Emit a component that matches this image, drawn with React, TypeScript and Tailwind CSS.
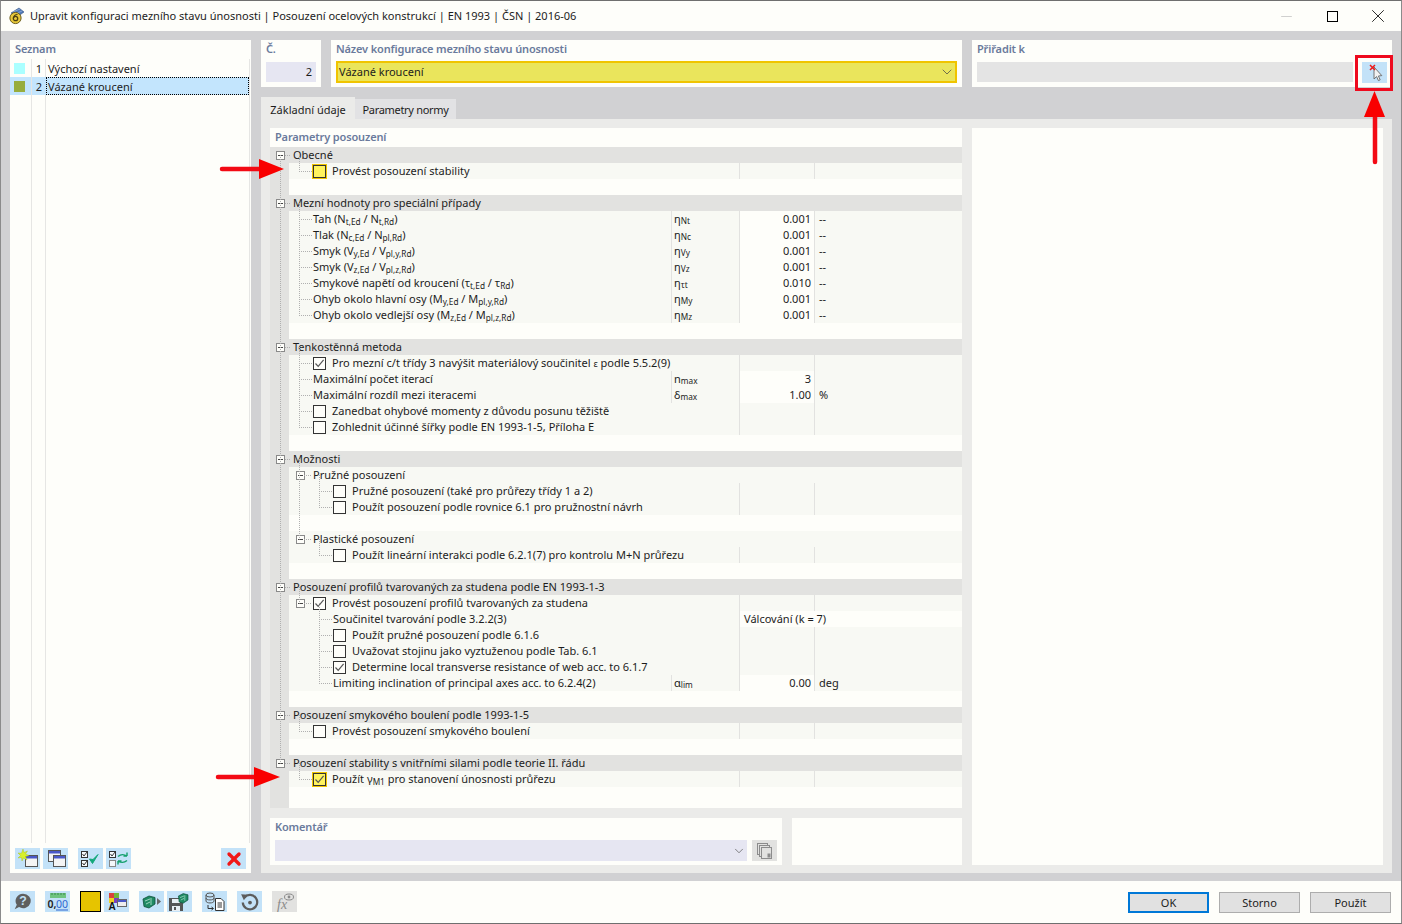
import type { ReactNode } from 'react';
import { ChevronDown, Minus, X } from 'lucide-react';

type Check = 'off' | 'on' | 'warn' | 'warnOn';

interface TreeRow {
  kind: 'head' | 'sub' | 'item' | 'blank';
  level?: number;
  box?: boolean;
  check?: Check;
  label?: ReactNode;
  sym?: ReactNode;
  value?: string;
  unit?: string;
  wide?: string;
}

const eta = (s: string) => (
  <>
    η<sub>{s}</sub>
  </>
);

const limit = (label: ReactNode, s: string, value: string): TreeRow => ({
  kind: 'item',
  level: 1,
  label,
  sym: eta(s),
  value,
  unit: '--',
});

const rows: TreeRow[] = [
  { kind: 'head', label: 'Obecné' },
  { kind: 'item', level: 1, check: 'warn', label: 'Provést posouzení stability' },
  { kind: 'blank' },
  { kind: 'head', label: 'Mezní hodnoty pro speciální případy' },
  limit(<>Tah (N<sub>t,Ed</sub> / N<sub>t,Rd</sub>)</>, 'Nt', '0.001'),
  limit(<>Tlak (N<sub>c,Ed</sub> / N<sub>pl,Rd</sub>)</>, 'Nc', '0.001'),
  limit(<>Smyk (V<sub>y,Ed</sub> / V<sub>pl,y,Rd</sub>)</>, 'Vy', '0.001'),
  limit(<>Smyk (V<sub>z,Ed</sub> / V<sub>pl,z,Rd</sub>)</>, 'Vz', '0.001'),
  limit(<>Smykové napětí od kroucení (τ<sub>t,Ed</sub> / τ<sub>Rd</sub>)</>, 'τt', '0.010'),
  limit(<>Ohyb okolo hlavní osy (M<sub>y,Ed</sub> / M<sub>pl,y,Rd</sub>)</>, 'My', '0.001'),
  limit(<>Ohyb okolo vedlejší osy (M<sub>z,Ed</sub> / M<sub>pl,z,Rd</sub>)</>, 'Mz', '0.001'),
  { kind: 'blank' },
  { kind: 'head', label: 'Tenkostěnná metoda' },
  { kind: 'item', level: 1, check: 'on', label: <>Pro mezní c/t třídy 3 navýšit materiálový součinitel <span className="text-[9px]">ε</span> podle 5.5.2(9)</> },
  { kind: 'item', level: 1, label: 'Maximální počet iterací', sym: <>n<sub>max</sub></>, value: '3' },
  { kind: 'item', level: 1, label: 'Maximální rozdíl mezi iteracemi', sym: <>δ<sub>max</sub></>, value: '1.00', unit: '%' },
  { kind: 'item', level: 1, check: 'off', label: 'Zanedbat ohybové momenty z důvodu posunu těžiště' },
  { kind: 'item', level: 1, check: 'off', label: 'Zohlednit účinné šířky podle EN 1993-1-5, Příloha E' },
  { kind: 'blank' },
  { kind: 'head', label: 'Možnosti' },
  { kind: 'sub', level: 1, box: true, label: 'Pružné posouzení' },
  { kind: 'item', level: 2, check: 'off', label: 'Pružné posouzení (také pro průřezy třídy 1 a 2)' },
  { kind: 'item', level: 2, check: 'off', label: 'Použít posouzení podle rovnice 6.1 pro pružnostní návrh' },
  { kind: 'blank' },
  { kind: 'sub', level: 1, box: true, label: 'Plastické posouzení' },
  { kind: 'item', level: 2, check: 'off', label: 'Použít lineární interakci podle 6.2.1(7) pro kontrolu M+N průřezu' },
  { kind: 'blank' },
  { kind: 'head', label: 'Posouzení profilů tvarovaných za studena podle EN 1993-1-3' },
  { kind: 'item', level: 1, box: true, check: 'on', label: 'Provést posouzení profilů tvarovaných za studena' },
  { kind: 'item', level: 2, label: 'Součinitel tvarování podle 3.2.2(3)', wide: 'Válcování (k = 7)' },
  { kind: 'item', level: 2, check: 'off', label: 'Použít pružné posouzení podle 6.1.6' },
  { kind: 'item', level: 2, check: 'off', label: 'Uvažovat stojinu jako vyztuženou podle Tab. 6.1' },
  { kind: 'item', level: 2, check: 'on', label: 'Determine local transverse resistance of web acc. to 6.1.7' },
  { kind: 'item', level: 2, label: 'Limiting inclination of principal axes acc. to 6.2.4(2)', sym: <>α<sub>lim</sub></>, value: '0.00', unit: 'deg' },
  { kind: 'blank' },
  { kind: 'head', label: 'Posouzení smykového boulení podle 1993-1-5' },
  { kind: 'item', level: 1, check: 'off', label: 'Provést posouzení smykového boulení' },
  { kind: 'blank' },
  { kind: 'head', label: 'Posouzení stability s vnitřními silami podle teorie II. řádu' },
  { kind: 'item', level: 1, check: 'warnOn', label: <>Použít γ<sub>M1</sub> pro stanovení únosnosti průřezu</> },
];

function PlusBox() {
  return (
    <span className="flex h-[9px] w-[9px] shrink-0 items-center justify-center border border-[#8a8a8a] bg-[#fefefa]">
      <span className="h-px w-[5px] bg-[#444]" />
    </span>
  );
}

function CheckBox({ state }: { state: Check }) {
  const warn = state === 'warn' || state === 'warnOn';
  const on = state === 'on' || state === 'warnOn';
  return (
    <span
      className={`flex h-[13px] w-[13px] shrink-0 items-center justify-center border border-[#333] ${
        warn ? 'bg-[#fff35e] outline-1 outline-[#f0c400]' : 'bg-[#fefefa]'
      }`}
    >
      {on && (
        <svg width="11" height="11" viewBox="0 0 11 11" fill="none">
          <path d="M1.5 5.5 L4.2 8.4 L9.6 1.8" stroke="#555" strokeWidth="1.2" />
        </svg>
      )}
    </span>
  );
}

function Row({ row }: { row: TreeRow }) {
  if (row.kind === 'blank') {
    return (
      <div className="flex h-4">
        <div className="w-[19px] bg-[#e2e2e0]" />
      </div>
    );
  }
  if (row.kind === 'head') {
    return (
      <div className="flex h-4 items-center bg-[#e2e2e0]">
        <div className="flex w-[23px] shrink-0 pl-[6px]">
          <PlusBox />
        </div>
        <span>{row.label}</span>
      </div>
    );
  }
  const pad = row.level === 2 ? 'pl-[44px]' : row.box ? 'pl-[7px]' : 'pl-[24px]';
  return (
    <div className="flex h-4">
      <div className="w-[19px] shrink-0 bg-[#e2e2e0]" />
      <div className="flex min-w-0 flex-1 bg-[#f8f9f4]">
        <div className={`flex w-[382px] shrink-0 items-center whitespace-nowrap ${pad}`}>
          {row.box && (
            <span className="mr-[8px]">
              <PlusBox />
            </span>
          )}
          {row.check && (
            <span className="mr-[6px]">
              <CheckBox state={row.check} />
            </span>
          )}
          <span>{row.label}</span>
        </div>
        {row.kind === 'item' && (
          <>
            <div className={`flex w-[68px] shrink-0 items-center pl-[2px] ${row.sym ? 'border-l border-[#e2e2e0]' : ''}`}>
              {row.sym}
            </div>
            {row.wide ? (
              <div className="flex flex-1 items-center border-l border-[#e2e2e0] bg-[#fefefa] pl-1">{row.wide}</div>
            ) : (
              <>
                <div
                  className={`flex w-[75px] shrink-0 items-center justify-end border-l border-[#e2e2e0] pr-[3px] ${
                    row.value ? 'bg-[#fefefa]' : ''
                  }`}
                >
                  {row.value}
                </div>
                <div className="flex flex-1 items-center border-l border-[#e2e2e0] pl-1">{row.unit}</div>
              </>
            )}
          </>
        )}
      </div>
    </div>
  );
}

// dotted connectors of the tree, worked out from the row levels
function TreeLines() {
  const stems = [10, 29, 49];
  const segs: string[] = [];
  rows.forEach((row, i) => {
    if (row.kind === 'blank') return;
    const level = row.level ?? 0;
    const y = i * 16 + 8.5;
    let p = i - 1;
    while (p >= 0 && (rows[p].kind === 'blank' || (rows[p].level ?? 0) > level)) p--;
    if (p >= 0 && (rows[p].level ?? 0) >= level - 1) {
      const x = stems[level] + 0.5;
      segs.push(`M${x} ${p * 16 + 8}V${y}`);
    }
    if (level === 0) segs.push(`M15 ${y}H21`);
    else if (row.box) segs.push(`M${stems[level] + 5} ${y}H41`);
    else segs.push(`M${stems[level]} ${y}H${stems[level] + 13}`);
  });
  return (
    <svg className="pointer-events-none absolute left-0 top-0" width="80" height="660" fill="none">
      <path d={segs.join('')} stroke="#b0b0b0" strokeDasharray="1 1" />
    </svg>
  );
}

function Tool({ children, gray = false, className = '' }: { children: ReactNode; gray?: boolean; className?: string }) {
  return (
    <div className={`flex h-[21px] w-[25px] shrink-0 items-center justify-center ${gray ? 'bg-[#e2e2e0]' : 'bg-[#c3e2f8]'} ${className}`}>
      {children}
    </div>
  );
}

function DialogButton({ label, primary = false }: { label: string; primary?: boolean }) {
  return (
    <button
      className={`h-[21px] w-[81px] bg-[#e1e1e1] pt-px text-[11px] ${
        primary ? 'border-2 border-[#0078d7]' : 'border border-[#adadad]'
      }`}
    >
      {label}
    </button>
  );
}

const heading = 'text-[11px] font-semibold tracking-[-0.15px] text-[#6a7a9c]';

function AppLogo() {
  return (
    <svg width="18" height="18" viewBox="0 0 18 18">
      <path d="M3 6 L11 1 L16 5 L9 10 Z" fill="#4f79b8" stroke="#33517f" strokeWidth=".6" />
      <path d="M5 5 L12 2 M7 7 L14 4" stroke="#9db8de" strokeWidth=".7" />
      <circle cx="7.5" cy="11" r="5.6" fill="#e8c93a" stroke="#6b5c1b" />
      <circle cx="7.5" cy="11.5" r="2.2" fill="none" stroke="#4a4010" strokeWidth="1.3" />
      <path d="M5.6 11 Q6 7.5 9.5 7.5" fill="none" stroke="#4a4010" strokeWidth="1.2" />
    </svg>
  );
}

function WinIcon({ x, y }: { x: number; y: number }) {
  return (
    <g>
      <rect x={x + 0.5} y={y + 0.5} width="12" height="11" fill="#f4f4f4" stroke="#555" />
      <rect x={x + 1} y={y + 1} width="11" height="2.5" fill="#4a58c8" />
    </g>
  );
}

function NewIcon() {
  return (
    <svg width="22" height="19" viewBox="0 0 22 19">
      <WinIcon x={8} y={6} />
      <path d="M6 0 L7 3.5 L10.5 2 L8.5 5 L12 6.5 L8.5 7.5 L10 11 L6.5 9 L5 12 L4.5 8.5 L1 9 L3.5 6.5 L1 4 L4.5 4.2 Z" fill="#d8f02a" stroke="#9fb81a" strokeWidth=".4" />
    </svg>
  );
}

function CopyIcon() {
  return (
    <svg width="22" height="19" viewBox="0 0 22 19">
      <WinIcon x={3} y={1} />
      <WinIcon x={8} y={6} />
    </svg>
  );
}

function MiniBox({ y, checked = true }: { y: number; checked?: boolean }) {
  return (
    <g>
      <rect x="3.5" y={y + 0.5} width="6" height="6" fill="#f4f8fb" stroke={checked ? '#333' : '#888'} />
      {checked && <path d={`M4.5 ${y + 3} L6 ${y + 5} L9 ${y + 1}`} fill="none" stroke="#222" strokeWidth=".9" />}
    </g>
  );
}

function CheckAllIcon() {
  return (
    <svg width="25" height="21" viewBox="0 0 25 21">
      <MiniBox y={3} />
      <MiniBox y={12} />
      <path d="M11.5 11 L14.5 15.5 L20 6.5 L15 11.5 Z" fill="#12a87a" stroke="#12a87a" />
    </svg>
  );
}

function CheckSwapIcon() {
  return (
    <svg width="25" height="21" viewBox="0 0 25 21">
      <MiniBox y={3} />
      <MiniBox y={12} checked={false} />
      <path d="M12 8.5 Q16 5 21 8 M21 8 V4.5 M21 8 H17.5" fill="none" stroke="#14a06c" strokeWidth="1.4" />
      <path d="M21 12.5 Q17 16 12 13 M12 13 V16.5 M12 13 H15.5" fill="none" stroke="#14a06c" strokeWidth="1.4" />
    </svg>
  );
}

function HelpIcon() {
  return (
    <svg width="19" height="19" viewBox="0 0 17 17">
      <path d="M9 1.5 a6.8 6.5 0 1 1 -3.6 12 L1.5 15.5 L3.4 11.5 A6.8 6.5 0 0 1 9 1.5 Z" fill="#5f5f5f" />
      <text x="9" y="12" textAnchor="middle" fontSize="11" fontWeight="700" fontFamily="Liberation Sans, sans-serif" fill="#c3e2f8">?</text>
    </svg>
  );
}

function UnitsIcon() {
  return (
    <svg width="23" height="20" viewBox="0 0 23 20">
      <rect x="4" y="1" width="16" height="5" fill="#6fc481" />
      <path d="M6 1v2M9 1v2M12 1v2M15 1v2M18 1v2" stroke="#3a8a50" />
      <text x="1.5" y="16" fontSize="10.5" fontWeight="600" fontFamily="Noto Sans, sans-serif" fill="#222">0,</text>
      <text x="10" y="16" fontSize="10.5" fontFamily="Noto Sans, sans-serif" fill="#2f66d0">00</text>
      <path d="M10 18H22" stroke="#2f66d0" />
    </svg>
  );
}

function LabelsIcon() {
  return (
    <svg width="23" height="20" viewBox="0 0 23 20">
      <rect x="4" y="1" width="5" height="5" fill="#d8423c" />
      <rect x="9" y="1" width="5" height="5" fill="#6fb83a" />
      <rect x="4" y="6" width="5" height="5" fill="#f0d020" />
      <rect x="9" y="6" width="5" height="5" fill="#7a3fc0" />
      <text x="3.5" y="18" fontSize="10" fontWeight="700" fontFamily="Liberation Sans, sans-serif" fill="#111">A</text>
      <rect x="12.5" y="7.5" width="9" height="7" fill="#eee" stroke="#666" />
      <rect x="13" y="8" width="8" height="2" fill="#4a58c8" />
    </svg>
  );
}

function ModelIcon({ x = 0, y = 0 }: { x?: number; y?: number }) {
  return (
    <g transform={`translate(${x} ${y})`}>
      <path d="M1 5 L7 2 L13 3.5 L13 10 L7 14 L2 12.5 Z" fill="#1f8a63" stroke="#0f4f3a" strokeWidth=".8" />
      <path d="M3 7 L8 5 M4 10 L8 8 M9 4 V11" stroke="#bde8d4" strokeWidth=".8" />
    </g>
  );
}

function ViewIcon() {
  return (
    <svg width="21" height="17" viewBox="0 0 21 17">
      <ModelIcon x={1} y={1} />
      <path d="M16 5 L20 8.5 L16 12 Z" fill="#666" />
    </svg>
  );
}

function SaveModelIcon() {
  return (
    <svg width="23" height="20" viewBox="0 0 23 20">
      <path d="M1 6 H15 V19 H1 Z" fill="#555" />
      <rect x="4" y="7" width="8" height="4" fill="#e8eef2" />
      <rect x="4" y="14" width="8" height="5" fill="#e8eef2" />
      <rect x="6" y="15" width="2" height="3" fill="#555" />
      <g transform="scale(.8)">
        <ModelIcon x={12} y={0} />
      </g>
    </svg>
  );
}

function DbDocIcon() {
  return (
    <svg width="22" height="20" viewBox="0 0 22 20">
      <ellipse cx="6" cy="3" rx="4" ry="2" fill="none" stroke="#555" />
      <path d="M2 3v6c0 2.6 8 2.6 8 0V3M2 6c0 2.6 8 2.6 8 0" fill="none" stroke="#555" />
      <path d="M4 13v3.5h5M7.5 15l2 1.5-2 1.5" fill="none" stroke="#333" />
      <path d="M11.5 6.5H17l3 3v9h-8.5Z" fill="#fff" stroke="#333" />
      <path d="M13.5 11h4.5M13.5 13h4.5M13.5 15h4.5" stroke="#333" />
    </svg>
  );
}

function ResetIcon() {
  return (
    <svg width="20" height="20" viewBox="0 0 18 18" fill="none">
      <path d="M4 5 A6.5 6.5 0 1 1 2.5 9.5" stroke="#5c5c5c" strokeWidth="2" />
      <path d="M1 2 L7 2.5 L3.5 7.5 Z" fill="#5c5c5c" />
      <circle cx="9" cy="9.5" r="1.7" fill="#5c5c5c" />
    </svg>
  );
}

function FxIcon() {
  return (
    <svg width="21" height="20" viewBox="0 0 21 20">
      <text x="3" y="17" fontSize="14" fontStyle="italic" fontFamily="Liberation Serif, serif" fill="#8a8a8a">fx</text>
      <ellipse cx="15" cy="5" rx="4.5" ry="3" fill="none" stroke="#8a8a8a" />
      <circle cx="15" cy="5" r="1.4" fill="#8a8a8a" />
    </svg>
  );
}

function PasteDocIcon() {
  return (
    <svg width="19" height="18" viewBox="0 0 19 18" fill="none" stroke="#8c8c8c">
      <rect x="2.5" y="1.5" width="10" height="11" />
      <rect x="4.5" y="3.5" width="10" height="11" fill="#e2e2e0" />
      <rect x="6.5" y="5.5" width="10" height="11" fill="#e2e2e0" />
      <rect x="13" y="12" width="2" height="3" fill="#8c8c8c" />
    </svg>
  );
}

function PickIcon() {
  return (
    <svg width="20" height="19" viewBox="0 0 20 19">
      <path d="M9 4 L9 16 L11.6 13.6 L13.4 17.6 L15.2 16.8 L13.4 13 L16.8 12.6 Z" fill="#f2f2f2" stroke="#666" strokeWidth=".9" />
      <path d="M5 2 L10 7 M10 2 L5 7" stroke="#f01818" strokeWidth="1.5" />
    </svg>
  );
}

export default function App() {
  return (
    <div className="relative flex h-[924px] w-[1402px] flex-col overflow-hidden border border-t-[#6f6f6f] border-x-[#8b8b8b] border-b-[#6f6f6f] bg-[#fefefa] font-['Noto_Sans',sans-serif] text-[11px] leading-4 text-[#1c1c1c]">
      {/* title bar */}
      <div className="flex h-[30px] shrink-0 items-center pl-[7px]">
        <AppLogo />
        <span className="ml-[4px] text-[11px]">
          Upravit konfiguraci mezního stavu únosnosti | Posouzení ocelových konstrukcí | EN 1993 | ČSN | 2016-06
        </span>
        <div className="ml-auto flex items-center pr-[12px]">
          <Minus size={17} strokeWidth={1} className="text-[#bdbdbd]" />
          <span className="ml-[32px] h-[11px] w-[11px] border border-black" />
          <X size={22} strokeWidth={0.9} className="ml-[29px] text-black" />
        </div>
      </div>

      <div className="flex flex-1 gap-[10px] bg-[#d1d1d3] pb-2 pl-[9px] pr-[9px] pt-[9px]">
        {/* list */}
        <div className="flex w-[241px] shrink-0 flex-col bg-[#fefefa]">
          <div className={`h-[19px] pl-[5px] pt-[1px] ${heading}`}>Seznam</div>
          <div className="flex w-[240px] flex-1 flex-col border-r border-[#e6e6e4]">
            <div className="flex h-[18px] shrink-0 items-center">
              <div className="flex h-full w-[22px] items-center border-r border-[#e6e6e4] pl-1">
                <span className="h-[11px] w-[11px] bg-[#aaffff]" />
              </div>
              <div className="flex h-full w-[14px] items-center justify-end border-r border-[#e6e6e4] pr-[3px] pt-[2px]">1</div>
              <span className="pl-[2px] pt-[2px]">Výchozí nastavení</span>
            </div>
            <div className="flex h-[18px] shrink-0 items-center">
              <div className="flex h-full w-[22px] items-center border-r border-[#e6e6e4] bg-[#c3e5fd] pl-1">
                <span className="h-[11px] w-[11px] bg-[#97ad3d]" />
              </div>
              <div className="flex h-full w-[14px] items-center justify-end border-r border-[#c3e5fd] bg-[#c3e5fd] pr-[3px] pt-[2px]">2</div>
              <span className="flex h-full w-[203px] items-center border border-dotted border-black bg-[#c3e5fd] pl-px pt-[2px]">
                Vázané kroucení
              </span>
            </div>
            <div className="ml-[21px] w-[15px] flex-1 border-x border-[#e6e6e4]" />
          </div>
          <div className="mt-[5px] flex items-center pb-1 pl-[5px] pr-[5px]">
            <Tool><NewIcon /></Tool>
            <Tool className="ml-[3px]"><CopyIcon /></Tool>
            <Tool className="ml-[10px]"><CheckAllIcon /></Tool>
            <Tool className="ml-[3px]"><CheckSwapIcon /></Tool>
            <Tool className="ml-auto">
              <X size={20} strokeWidth={4} className="text-[#f01818]" />
            </Tool>
          </div>
        </div>

        <div className="flex min-w-0 flex-1 flex-col">
          {/* top cards */}
          <div className="flex h-[47px] gap-[10px]">
            <div className="flex w-[60px] flex-col bg-[#fefefa] px-[5px]">
              <div className={`h-[22px] pt-[1px] ${heading}`}>Č.</div>
              <div className="flex h-5 items-center justify-end bg-[#e6e6f2] pr-1">2</div>
            </div>
            <div className="flex w-[631px] flex-col bg-[#fefefa] px-[5px]">
              <div className={`h-[21px] pt-[1px] ${heading}`}>Název konfigurace mezního stavu únosnosti</div>
              <div className="flex h-[22px] items-center justify-between border-2 border-[#f0c400] bg-[#eae55c] pl-px">
                Vázané kroucení
                <ChevronDown size={16} strokeWidth={1.1} className="text-[#444]" />
              </div>
            </div>
            <div className="flex flex-1 flex-col bg-[#fefefa] pl-[5px] pr-[5px]">
              <div className={`h-[22px] pt-[1px] ${heading}`}>Přiřadit k</div>
              <div className="flex items-start gap-[9px]">
                <div className="h-5 flex-1 bg-[#e4e4e4]" />
                <Tool><PickIcon /></Tool>
              </div>
            </div>
          </div>

          {/* tabs */}
          <div className="mt-[10px] flex h-[22px] items-end">
            <div className="flex h-[22px] w-[94px] items-center justify-center bg-[#ebebe9] pt-[3px]">Základní údaje</div>
            <div className="flex h-5 w-[101px] items-center justify-center bg-[#e2e2e4] pt-[2px] tracking-[-0.3px]">Parametry normy</div>
          </div>

          <div className="flex flex-1 gap-[10px] bg-[#ebebe9] p-[9px] pb-2">
            <div className="flex w-[692px] shrink-0 flex-col">
              <div className="flex-1 bg-[#fefefa]">
                <div className={`h-[19px] pl-[5px] pt-[1px] ${heading}`}>Parametry posouzení</div>
                <div className="relative h-[661px] bg-[linear-gradient(to_right,#e2e2e0_19px,transparent_19px)]">
                  {rows.map((row, i) => (
                    <Row key={i} row={row} />
                  ))}
                  <TreeLines />
                </div>
              </div>
              <div className="mt-[10px] flex h-[47px] gap-[10px]">
                <div className="flex w-[512px] flex-col bg-[#fefefa] px-[5px]">
                  <div className={`h-[22px] pt-px ${heading}`}>Komentář</div>
                  <div className="flex items-center gap-[5px]">
                    <div className="flex h-[21px] flex-1 items-center justify-end bg-[#e6e6f2] pr-px">
                      <ChevronDown size={14} strokeWidth={1.2} className="text-[#555]" />
                    </div>
                    <Tool gray><PasteDocIcon /></Tool>
                  </div>
                </div>
                <div className="flex-1 bg-[#fefefa]" />
              </div>
            </div>
            <div className="flex-1 bg-[#fefefa]" />
          </div>
        </div>
      </div>

      {/* bottom bar */}
      <div className="flex h-[42px] shrink-0 items-start pl-[9px] pr-[10px] pt-[10px]">
        <Tool><HelpIcon /></Tool>
        <Tool className="ml-[10px]"><UnitsIcon /></Tool>
        <div className="ml-[10px] h-[21px] w-[21px] border border-black bg-[#e6c400]" />
        <Tool className="ml-[3px]"><LabelsIcon /></Tool>
        <Tool className="ml-[10px]"><ViewIcon /></Tool>
        <Tool className="ml-[3px]"><SaveModelIcon /></Tool>
        <Tool className="ml-[10px]"><DbDocIcon /></Tool>
        <Tool className="ml-[10px]"><ResetIcon /></Tool>
        <Tool gray className="ml-[10px]"><FxIcon /></Tool>
        <div className="ml-auto mt-px flex gap-[10px]">
          <DialogButton label="OK" primary />
          <DialogButton label="Storno" />
          <DialogButton label="Použít" />
        </div>
      </div>

      {/* red annotations on top of the screenshot */}
      <div className="absolute left-[1354px] top-[54px] h-[36px] w-[38px] border-[3px] border-[#ee0a1e]" />
      <svg className="pointer-events-none absolute -left-px -top-px" width="1402" height="924">
        <path d="M222 169H260" stroke="#f30a14" strokeWidth="4.5" strokeLinecap="round" />
        <path d="M259 159L284 169L259 179Z" fill="#f90000" />
        <path d="M218 777H255" stroke="#f30a14" strokeWidth="4.5" strokeLinecap="round" />
        <path d="M254 767L280 777L254 787Z" fill="#f90000" />
        <path d="M1375 116V162" stroke="#f30a14" strokeWidth="4.5" strokeLinecap="round" />
        <path d="M1364 117L1374.5 91L1385 117Z" fill="#f90000" />
      </svg>
    </div>
  );
}
